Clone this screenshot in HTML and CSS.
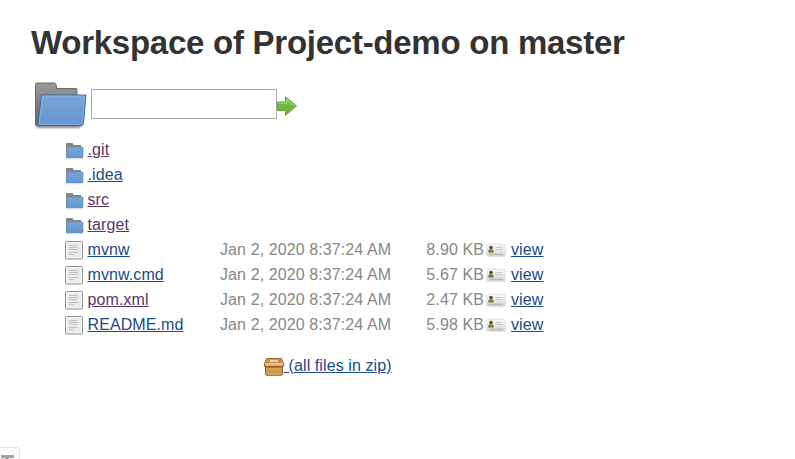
FILE: index.html
```html
<!DOCTYPE html>
<html lang="en">
<head>
<meta charset="utf-8">
<title>Workspace of Project-demo on master</title>
<link rel="stylesheet" href="styles.css">
</head>
<body>
<svg class="defs" aria-hidden="true">
  <defs>
    <linearGradient id="blue" x1="0" y1="0" x2="0" y2="1"><stop offset="0" stop-color="#79a5d8"/><stop offset="1" stop-color="#6496d0"/></linearGradient>
    <linearGradient id="gray" x1="0" y1="0" x2="0" y2="1"><stop offset="0" stop-color="#949494"/><stop offset="1" stop-color="#696969"/></linearGradient>
    <linearGradient id="green" x1="0" y1="0" x2="0" y2="1"><stop offset="0" stop-color="#8bc95a"/><stop offset="1" stop-color="#58a62a"/></linearGradient>
    <linearGradient id="card" x1="0" y1="0" x2="0" y2="1"><stop offset="0" stop-color="#fafafa"/><stop offset="1" stop-color="#d4d4d4"/></linearGradient>
    <linearGradient id="box" x1="0" y1="0" x2="0" y2="1"><stop offset="0" stop-color="#dba65c"/><stop offset="1" stop-color="#c98f45"/></linearGradient>
    <symbol id="folder" viewBox="0 0 20 20">
      <path d="M2 16.700V2.700Q2 2 2.700 2H8.500l1.300 2H17V15.500z" fill="#858585"/>
      <path d="M3 6H19V16.100Q18.900 17 18.100 17H3.300Q2.500 17 2.500 16.200z" fill="url(#blue)" stroke="#5c8abf" stroke-width=".6"/>
      <path d="M2.500 17.900H18.500" stroke="#ddd" stroke-width=".8"/>
    </symbol>
    <symbol id="file" viewBox="0 0 20 20">
      <rect x="1.500" y=".5" width="17" height="17.500" rx="1" fill="#f6f6f4" stroke="#8f8f8d" stroke-width="1"/>
      <rect x="3" y="2" width="14" height="14.500" fill="#ebebe9"/>
      <path d="M5 4.500h8M5 6.500h9M5 8.500h8M5 11.500h9M5 13.500h5" stroke="#c0c0be" stroke-width="1"/>
    </symbol>
    <symbol id="print" viewBox="0 0 20 20">
      <rect x=".7" y="3.300" width="18.600" height="12.200" rx="1.500" fill="url(#card)" stroke="#dcdcdc" stroke-width=".8"/>
      <circle cx="5" cy="6.600" r="1.800" fill="#5f4c20"/>
      <path d="M2.300 11.500V10Q2.700 8 5 8T7.700 10v1.500z" fill="#7f7030"/>
      <path d="M4.200 8.400h1.800l-.7 1.700z" fill="#c3ae61"/>
      <path d="M9.500 6.500h6M9.500 8.500h7" stroke="#cacaca" stroke-width="1"/>
      <path d="M3 13.400h14" stroke="#b8b8b8" stroke-width="1.400"/>
    </symbol>
  </defs>
</svg>
<main>
  <h1>Workspace of Project-demo on master</h1>
  <form class="path">
    <svg class="big" viewBox="0 0 56 50">
      <rect class="shadow" x="5" y="44" width="45" height="4" rx="2" fill="#888"/>
      <path d="M4.500 45V4.500Q4.500 3 6 3H23Q24.500 3 25 4.500l1 4H45Q46 8.500 46 10V40L8 45.500z" fill="url(#gray)" stroke="#6a6a6a"/>
      <path d="M6 5h17M6 7h18M6 9h19M6 11h39M6 13h39" stroke="#aaa" stroke-width=".6" opacity=".65"/>
      <path d="M10.500 15H55L52.500 43.500Q52.200 45.500 50 45.500H6.800z" fill="url(#blue)" stroke="#3269af"/>
      <path d="M11.500 16.100H53.800L51.400 43Q51.200 44.400 49.500 44.400H8z" fill="none" stroke="#94b8e4" stroke-width=".7"/>
    </svg>
    <input type="text" aria-label="Path">
    <svg class="go" viewBox="0 0 20 20">
      <path d="M.5 6H8.500V.8L19.500 10 8.500 19.200V14.500H.5z" fill="url(#green)" stroke="#5ba42d"/>
      <path d="M1.700 7.300H9.600V3.200L17.500 10" fill="none" stroke="#bae88c" stroke-width=".8"/>
      <path d="M1.500 13.300H9.600V16.700L17.500 10" fill="none" stroke="#82c64c" stroke-width=".7"/>
    </svg>
  </form>
  <div class="files">
    <div class="row"><svg><use href="#folder"/></svg><a class="seen" href="#">.git</a></div>
    <div class="row"><svg><use href="#folder"/></svg><a href="#">.idea</a></div>
    <div class="row"><svg><use href="#folder"/></svg><a class="seen" href="#">src</a></div>
    <div class="row"><svg><use href="#folder"/></svg><a class="seen" href="#">target</a></div>
    <div class="row"><svg><use href="#file"/></svg><a href="#">mvnw</a><span class="date">Jan 2, 2020 8:37:24 AM</span><span class="size">8.90 KB</span><svg><use href="#print"/></svg><a href="#">view</a></div>
    <div class="row"><svg><use href="#file"/></svg><a href="#">mvnw.cmd</a><span class="date">Jan 2, 2020 8:37:24 AM</span><span class="size">5.67 KB</span><svg><use href="#print"/></svg><a href="#">view</a></div>
    <div class="row"><svg><use href="#file"/></svg><a class="seen" href="#">pom.xml</a><span class="date">Jan 2, 2020 8:37:24 AM</span><span class="size">2.47 KB</span><svg><use href="#print"/></svg><a href="#">view</a></div>
    <div class="row"><svg><use href="#file"/></svg><a href="#">README.md</a><span class="date">Jan 2, 2020 8:37:24 AM</span><span class="size">5.98 KB</span><svg><use href="#print"/></svg><a href="#">view</a></div>
  </div>
  <div class="zip">
    <svg viewBox="0 0 20 20">
      <path d="M1.500 9H18.500V17Q18.500 18.300 17.200 18.300H2.800Q1.500 18.300 1.500 17z" fill="url(#box)" stroke="#94642a"/>
      <path d="M2.500 1.500H17.500L19.500 6.500V9.500H.5V6.500z" fill="#dca860" stroke="#94642a"/>
      <path d="M3.400 2.500H16.600L18 6H2z" fill="#c18d48"/>
      <path d="M1.200 7H18.800" stroke="#f1d3a0" stroke-width="1.300"/>
      <path d="M2 10.500H18" stroke="#a87534" stroke-width="1"/>
      <rect x="6" y="3" width="8" height="2" fill="#ecd3a8"/>
      <path d="M2.500 17H17.500" stroke="#e8b970"/>
    </svg><a href="#">&nbsp;(all files in zip)</a>
  </div>
</main>
<div class="corner"><svg viewBox="0 0 14 6"><path d="M0 1.500H13" stroke="#a4a4a4" stroke-width="3"/><path d="M0 4H13" stroke="#ddd"/><path d="M6 3V6" stroke="#999" stroke-width="3"/></svg></div>
</body>
</html>
```
FILE: styles.css
```css
* { box-sizing: border-box; }
body {
  margin: 0;
  height: 459px;
  overflow: hidden;
  background: #fff;
  color: #333;
  font: 16px/25px "Liberation Sans", Arial, sans-serif;
  letter-spacing: 0.1px;
}
.defs { position: absolute; width: 0; height: 0; }
main { padding: 23px 0 0 31px; }
svg { display: block; flex: none; }
h1 {
  margin: 0;
  font-size: 33px;
  line-height: 40px;
  font-weight: 700;
  letter-spacing: -0.26px;
  white-space: nowrap;
}
.path { display: flex; align-items: flex-start; height: 74px; padding-top: 17px; }
.big { width: 56px; height: 50px; }
.shadow { filter: blur(1.2px); }
.path input {
  width: 186px;
  height: 30px;
  margin: 9px 0 0 4px;
  padding: 4px;
  border: 1px solid #aaa;
  background: #fff;
  font: inherit;
}
.go { width: 20px; height: 20px; margin-top: 16px; }
.files { padding-left: 33px; }
.row {
  display: grid;
  grid-template-columns: 20px 132px 180px 88px 22px auto;
  align-items: center;
  height: 25px;
}
.row svg { width: 20px; height: 20px; margin-top: 2px; justify-self: end; }
a { color: #204a87; text-decoration: underline; white-space: nowrap; }
.row a { padding-left: 3px; }
.row svg + a:last-child { padding-left: 5px; }
.row svg:first-child + a { padding-left: 3.5px; }
a.seen { color: #5c3566; }
.date, .size { color: #888; white-space: nowrap; }
.date { padding-left: 4px; }
.size { text-align: right; }
.zip { display: flex; margin: 16px 0 0 233px; }
.zip svg { width: 20px; height: 20px; margin-top: 4px; }
.corner {
  position: absolute;
  left: -2px;
  bottom: -4px;
  width: 22px;
  height: 16px;
  padding: 7px 0 0 2px;
  border: 1px solid #e5e5e5;
  border-radius: 3px;
}
.corner svg { width: 14px; height: 6px; }
```
